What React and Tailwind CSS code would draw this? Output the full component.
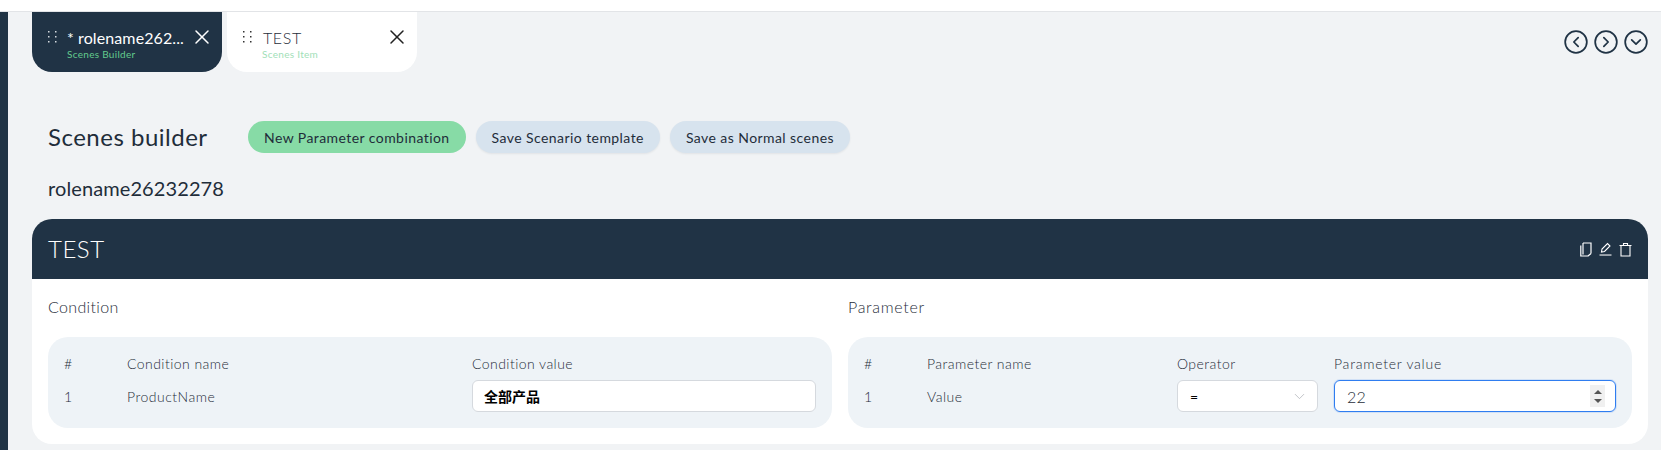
import { ChevronDown, CircleChevronLeft, CircleChevronRight, CircleChevronDown, X } from "lucide-react";

const tabs = [
  { title: "* rolename262...", sub: "Scenes Builder", active: true },
  { title: "TEST", sub: "Scenes Item", active: false },
];

function DragDots({ className }) {
  return (
    <svg width="9" height="13" viewBox="0 0 9 13" className={className} fill="currentColor">
      <rect x="0" y="0" width="1.5" height="1.5" />
      <rect x="7" y="0" width="1.5" height="1.5" />
      <rect x="0" y="5" width="1.5" height="1.5" />
      <rect x="7" y="5" width="1.5" height="1.5" />
      <rect x="0" y="10" width="1.5" height="1.5" />
      <rect x="7" y="10" width="1.5" height="1.5" />
    </svg>
  );
}

function Tab({ title, sub, active }) {
  return (
    <div
      className={`flex h-[60px] w-[190px] items-start rounded-b-[20px] pl-4 pr-[14px] pt-[19px] ${
        active ? "bg-[#203345] text-white" : "bg-white text-[#1f2d3a]"
      }`}
    >
      <DragDots className={`shrink-0 ${active ? "text-[#d5dbe0]" : "text-[#333]"}`} />
      <div className="ml-[10px] min-w-0 flex-1 -mt-[3px]">
        <div className={`whitespace-nowrap text-[16px] leading-[20px] ${active ? "font-normal tracking-[0.1px]" : "pl-px font-light tracking-[0.6px]"}`}>
          {title}
        </div>
        <div
          className={`text-[10px] leading-[13px] tracking-[0.3px] ${
            active ? "text-[#63cb8e]" : "text-[#9fe0b8]"
          }`}
        >
          {sub}
        </div>
      </div>
      <X size={24} strokeWidth={1.5} className={`-mt-[6px] -mr-[6px] shrink-0 ${active ? "text-white" : "text-[#222]"}`} />
    </div>
  );
}

function Pill({ children, green }) {
  return (
    <button
      type="button"
      className={`h-8 rounded-full px-4 text-[14px] font-normal tracking-[0.43px] text-[#1f2d3a] ${
        green ? "bg-[#87dba6]" : "bg-[#d7e3ee] shadow-[0_1px_2px_rgba(32,51,69,0.08)]"
      }`}
    >
      {children}
    </button>
  );
}

function CardIcons() {
  return (
    <div className="flex items-center gap-[7px] text-white">
      <svg width="12" height="15" viewBox="0 0 12 15" fill="none" stroke="currentColor" strokeWidth="1.2">
        <path d="M3 1h8v10.5" />
        <path d="M3 1v11.5" />
        <path d="M0.8 3.5v10.5h7.5" />
        <path d="M11 11.5l-3 2.5" />
      </svg>
      <svg width="13" height="14" viewBox="0 0 13 14" fill="none" stroke="currentColor" strokeWidth="1.1">
        <path d="M2.5 10l0.5-3 5.5-5.5 2.5 2.5-5.5 5.5z" />
        <path d="M0.5 13h12" />
      </svg>
      <svg width="13" height="15" viewBox="0 0 13 15" fill="none" stroke="currentColor" strokeWidth="1.1">
        <path d="M0.5 3.5h12" />
        <path d="M4.5 3.5v-2h4v2" />
        <path d="M2 3.5v10.5h9v-10.5" />
      </svg>
    </div>
  );
}

const headCls = "text-[14px] leading-5 font-light tracking-[0.45px] text-[#1f2d3a]";
const cellCls = "h-8 flex items-center text-[14px] font-light tracking-[0.5px] text-[#1f2d3a]";
const boxCls = "h-8 w-full rounded-[6px] border border-[#d5d9de] bg-white text-[14px]";

export default function App() {
  return (
    <div className="flex h-[450px] overflow-hidden bg-[#f1f3f5] font-['Lato','Noto_Sans_CJK_SC',sans-serif] text-[#1f2d3a]">
      <div className="mt-3 w-2 shrink-0 bg-[#203345]" />
      <div className="min-w-0 flex-1">
        <div className="-ml-2 h-3 border-b border-[#e2e4e7] bg-white" />

        <div className="flex items-start justify-between pl-6 pr-[12px]">
          <div className="flex gap-[5px]">
            {tabs.map((t) => (
              <Tab key={t.title} {...t} />
            ))}
          </div>
          <div className="mt-[17px] flex gap-1 text-[#203345]">
            <CircleChevronLeft size={26} strokeWidth={1.6} />
            <CircleChevronRight size={26} strokeWidth={1.6} />
            <CircleChevronDown size={26} strokeWidth={1.6} />
          </div>
        </div>

        <div className="mt-[49px] flex items-center pl-10">
          <h1 className="w-[200px] text-[24px] leading-8 tracking-[0.5px] font-normal">Scenes builder</h1>
          <div className="flex gap-[10px]">
            <Pill green>New Parameter combination</Pill>
            <Pill>Save Scenario template</Pill>
            <Pill>Save as Normal scenes</Pill>
          </div>
        </div>

        <div className="mb-[16px] mt-5 pl-10 text-[20px] leading-[30px] tracking-[0.1px]">rolename26232278</div>

        <div className="ml-6 mr-[13px] overflow-hidden rounded-[20px] bg-white">
          <div className="flex h-[60px] items-center justify-between bg-[#203345] pl-4 pr-4 text-white">
            <span className="text-[24px] font-light tracking-[0.5px]">TEST</span>
            <CardIcons />
          </div>
          <div className="grid grid-cols-2 gap-4 px-4 pb-4">
            <section>
              <div className="flex h-[58px] items-center pb-[2px] text-[16px] font-light tracking-[0.35px] text-[#1f2d3a]">Condition</div>
              <div className="grid grid-cols-[63px_345px_1fr] rounded-[20px] bg-[#eef3f7] px-4 pb-4 pt-[17px]">
                <div className={headCls}>#</div>
                <div className={headCls}>Condition name</div>
                <div className={headCls}>Condition value</div>
                <div className={`${cellCls} mt-[6px]`}>1</div>
                <div className={`${cellCls} mt-[6px]`}>ProductName</div>
                <input
                  readOnly
                  value="全部产品"
                  className={`${boxCls} mt-[6px] pl-[11px] font-bold text-black outline-none`}
                />
              </div>
            </section>
            <section>
              <div className="flex h-[58px] items-center pb-[2px] text-[16px] font-light tracking-[0.7px] text-[#1f2d3a]">Parameter</div>
              <div className="grid grid-cols-[63px_250px_157px_1fr] rounded-[20px] bg-[#eef3f7] px-4 pb-4 pt-[17px]">
                <div className={headCls}>#</div>
                <div className={`${headCls} tracking-[0.7px]`}>Parameter name</div>
                <div className={headCls}>Operator</div>
                <div className={`${headCls} tracking-[0.75px]`}>Parameter value</div>
                <div className={`${cellCls} mt-[6px]`}>1</div>
                <div className={`${cellCls} mt-[6px]`}>Value</div>
                <div className="mt-[6px] pr-4">
                  <div className={`${boxCls} flex items-center justify-between pl-3 pr-[9px]`}>
                    <span className="text-black">=</span>
                    <ChevronDown size={17} strokeWidth={1} className="text-[#a9adb2]" />
                  </div>
                </div>
                <div className="relative mt-[6px]">
                  <input
                    readOnly
                    value="22"
                    className="h-8 w-full rounded-[6px] border border-[#2f7df0] bg-white pl-3 text-[16px] font-light tracking-[0.2px] text-[#1f2d3a] shadow-[0_0_0_1px_rgba(47,125,240,0.15)] outline-none"
                  />
                  <div className="absolute right-[11px] top-[5px] flex h-[22px] w-[15px] flex-col items-center justify-center gap-[5px] bg-[#f0f0f0]">
                    <span className="h-0 w-0 border-x-[4px] border-b-[4px] border-x-transparent border-b-[#555]" />
                    <span className="h-0 w-0 border-x-[4px] border-t-[4px] border-x-transparent border-t-[#555]" />
                  </div>
                </div>
              </div>
            </section>
          </div>
        </div>
      </div>
    </div>
  );
}
